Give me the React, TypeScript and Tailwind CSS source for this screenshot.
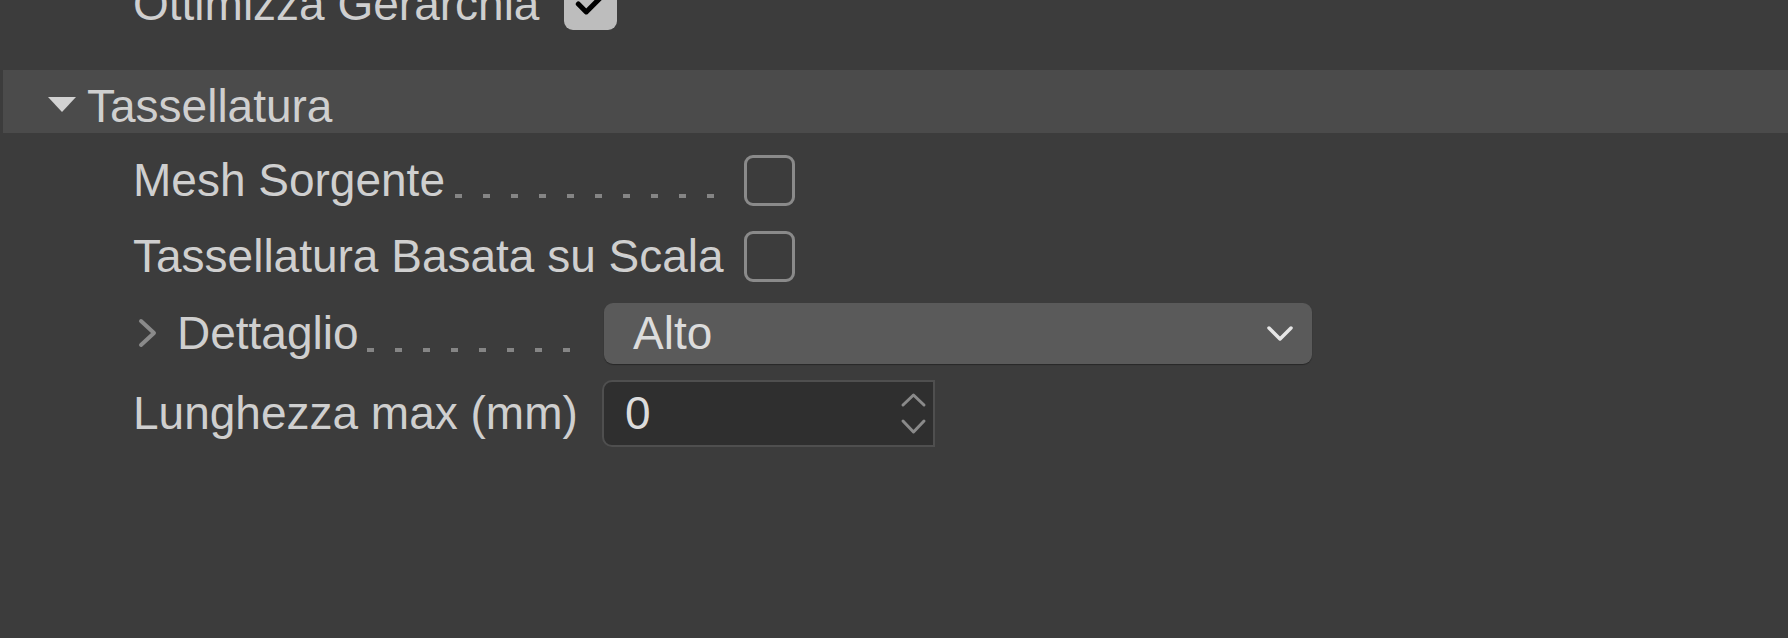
import { Check } from 'lucide-react';

const FONT = '"Liberation Sans", Arial, sans-serif';

function Dashes({ count }: { count: number }) {
  return (
    <div className="flex items-end gap-[21px] self-end mb-[20px]">
      {Array.from({ length: count }).map((_, i) => (
        <span key={i} className="block w-[7px] h-[4px] bg-[#858585]" />
      ))}
    </div>
  );
}

function Checkbox({ checked }: { checked?: boolean }) {
  if (checked) {
    return (
      <div className="w-[53px] h-[52px] rounded-[9px] bg-[#bdbdbd] flex items-center justify-center">
        <Check className="w-[38px] h-[38px] text-black" strokeWidth={3.2} />
      </div>
    );
  }
  return <div className="w-[51px] h-[51px] rounded-[9px] border-[3px] border-[#8a8a8a]" />;
}

export default function App() {
  return (
    <div
      className="w-full h-[638px] bg-[#3c3c3c] text-[#cfcfcf] text-[46px] leading-none overflow-hidden"
      style={{ fontFamily: FONT }}
    >
      {/* previous section, cut off at the top */}
      <div className="flex items-center h-[52px] mt-[-22px] pl-[133px]">
        <span>Ottimizza Gerarchia</span>
        <div className="ml-[25px]">
          <Checkbox checked />
        </div>
      </div>

      {/* section header */}
      <div className="mt-[40px] ml-[3px] h-[63px] bg-[#4b4b4b] flex items-center">
        <svg className="ml-[45px] mt-[6px]" width="28" height="15" viewBox="0 0 28 15">
          <path d="M0 0 H28 L14 15 Z" fill="#d2d2d2" />
        </svg>
        <span className="ml-[11px] mt-[8px]">Tassellatura</span>
      </div>

      <div className="mt-[9px] pl-[133px]">
        <div className="h-[76px] flex items-center">
          <div className="w-[611px] flex items-center h-full">
            <span>Mesh Sorgente</span>
            <div className="ml-[10px] flex h-full items-center">
              <Dashes count={10} />
            </div>
          </div>
          <Checkbox />
        </div>

        <div className="h-[76px] flex items-center">
          <div className="w-[611px]">
            <span>Tassellatura Basata su Scala</span>
          </div>
          <Checkbox />
        </div>

        <div className="h-[78px] flex items-center">
          <div className="w-[471px] flex items-center h-full">
            <svg className="ml-[3px]" width="24" height="30" viewBox="0 0 24 30">
              <path d="M5 3 L18 15 L5 27" stroke="#8a8a8a" strokeWidth="4" fill="none" strokeLinecap="round" strokeLinejoin="round" />
            </svg>
            <span className="ml-[17px]">Dettaglio</span>
            <div className="ml-[8px] flex h-full items-center">
              <Dashes count={8} />
            </div>
          </div>
          <div className="w-[708px] h-[61px] rounded-[9px] bg-[#5a5a5a] shadow-[0_1px_1px_rgba(0,0,0,0.35)] flex items-center justify-between pl-[29px] pr-[18px]">
            <span className="text-[#dcdcdc]">Alto</span>
            <svg width="28" height="17" viewBox="0 0 28 17">
              <path d="M3 3 L14 14 L25 3" stroke="#e6e6e6" strokeWidth="3.5" fill="none" strokeLinecap="round" strokeLinejoin="round" />
            </svg>
          </div>
        </div>

        <div className="h-[82px] flex items-center">
          <div className="w-[469px]">
            <span>Lunghezza max (mm)</span>
          </div>
          <div className="w-[333px] h-[67px] rounded-l-[10px] bg-[#2f2f2f] border-2 border-[#4f4f4f] flex items-center justify-between pl-[21px] pr-[6px]">
            <span className="text-[#dcdcdc]">0</span>
            <svg width="27" height="45" viewBox="0 0 27 45">
              <path d="M3 14 L13.5 4 L24 14" stroke="#8a8a8a" strokeWidth="3" fill="none" strokeLinecap="round" strokeLinejoin="round" />
              <path d="M3 30 L13.5 41 L24 30" stroke="#8a8a8a" strokeWidth="3" fill="none" strokeLinecap="round" strokeLinejoin="round" />
            </svg>
          </div>
        </div>
      </div>
    </div>
  );
}
